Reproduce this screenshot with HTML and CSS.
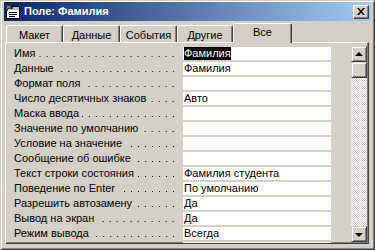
FILE: index.html
```html
<!DOCTYPE html>
<html lang="ru">
<head>
<meta charset="utf-8">
<title>Поле: Фамилия</title>
<link rel="stylesheet" href="styles.css">
</head>
<body>
<div class="window">
  <div class="titlebar">
    <svg class="app-icon" width="16" height="16" viewBox="0 0 16 16">
      <rect x="1.5" y="2.5" width="13" height="12" fill="#fff" stroke="#000"/>
      <rect x="2" y="3" width="12" height="3" fill="#c0c0c0"/>
      <line x1="4" y1="8.5" x2="12" y2="8.5" stroke="#000"/>
      <line x1="4" y1="10.5" x2="12" y2="10.5" stroke="#000"/>
      <line x1="4" y1="12.5" x2="10" y2="12.5" stroke="#000"/>
      <path d="M1 1h5v2h2v2H3v2H1z" fill="#404040"/>
      <path d="M2 2h3v2H2z" fill="#808080"/>
    </svg>
    <span class="title">Поле: Фамилия</span>
    <button class="close" type="button" aria-label="Закрыть">
      <svg width="8" height="7" viewBox="0 0 8 7">
        <path d="M0 0h2l2 2.5L6 0h2L5 3.5 8 7H6L4 4.5 2 7H0l3-3.5z" fill="#000"/>
      </svg>
    </button>
  </div>

  <div class="tabctl">
    <div class="tabstrip">
      <div class="tab">Макет</div>
      <div class="tab">Данные</div>
      <div class="tab">События</div>
      <div class="tab">Другие</div>
      <div class="tab active">Все</div>
    </div>
    <div class="panel">
      <div class="props">
        <div class="row"><div class="label"><span>Имя</span><span class="dots"></span></div><div class="value"><span class="sel">Фамилия</span></div></div>
        <div class="row"><div class="label"><span>Данные</span><span class="dots"></span></div><div class="value">Фамилия</div></div>
        <div class="row"><div class="label"><span>Формат поля</span><span class="dots"></span></div><div class="value"></div></div>
        <div class="row"><div class="label"><span>Число десятичных знаков</span><span class="dots"></span></div><div class="value">Авто</div></div>
        <div class="row"><div class="label"><span>Маска ввода</span><span class="dots"></span></div><div class="value"></div></div>
        <div class="row"><div class="label"><span>Значение по умолчанию</span><span class="dots"></span></div><div class="value"></div></div>
        <div class="row"><div class="label"><span>Условие на значение</span><span class="dots"></span></div><div class="value"></div></div>
        <div class="row"><div class="label"><span>Сообщение об ошибке</span><span class="dots"></span></div><div class="value"></div></div>
        <div class="row"><div class="label"><span>Текст строки состояния</span><span class="dots"></span></div><div class="value">Фамилия студента</div></div>
        <div class="row"><div class="label"><span>Поведение по Enter</span><span class="dots"></span></div><div class="value">По умолчанию</div></div>
        <div class="row"><div class="label"><span>Разрешить автозамену</span><span class="dots"></span></div><div class="value">Да</div></div>
        <div class="row"><div class="label"><span>Вывод на экран</span><span class="dots"></span></div><div class="value">Да</div></div>
        <div class="row"><div class="label"><span>Режим вывода</span><span class="dots"></span></div><div class="value">Всегда</div></div>
        <div class="row"><div class="label"></div><div class="value"></div></div>
      </div>
      <div class="scrollbar">
        <div class="sbtn"><span class="arrow up"></span></div>
        <div class="track">
          <div class="thumb"></div>
        </div>
        <div class="sbtn"><span class="arrow down"></span></div>
      </div>
    </div>
  </div>
</div>
</body>
</html>
```

FILE: styles.css
```css
* { box-sizing: border-box; }

html, body {
  margin: 0;
  padding: 0;
  background: #d4d0c8;
}

body {
  font-family: "Liberation Sans", Arial, sans-serif;
  font-size: 11px;
  color: #000;
}

.window {
  width: 375px;
  height: 250px;
  background: #d4d0c8;
  border: 1px solid;
  border-color: #d4d0c8 #404040 #404040 #d4d0c8;
  box-shadow: inset 1px 1px #fff, inset -1px -1px #808080;
  padding: 1px 3px 3px 3px;
  display: flex;
  flex-direction: column;
  overflow: hidden;
}

.titlebar {
  height: 19px;
  flex: none;
  display: flex;
  align-items: center;
  padding: 0 2px 0 1px;
  background: linear-gradient(to right, #0a246a, #a6caf0);
}

.app-icon {
  flex: none;
  display: block;
}

.title {
  margin-left: 3px;
  color: #fff;
  font-weight: bold;
  font-size: 11px;
  line-height: 13px;
  flex: 1;
}

.close {
  flex: none;
  width: 16px;
  height: 14px;
  padding: 0;
  margin: 0;
  background: #d4d0c8;
  border: 1px solid;
  border-color: #fff #404040 #404040 #fff;
  box-shadow: inset -1px -1px #808080;
  display: flex;
  align-items: center;
  justify-content: center;
}

.close svg { display: block; margin: 0 1px 1px 0; }

.tabctl {
  flex: 1;
  display: flex;
  flex-direction: column;
  margin: 2px 2px 2px 1px;
  min-height: 0;
}

.tabstrip {
  height: 19px;
  flex: none;
  display: flex;
  align-items: flex-end;
  padding-left: 1px;
  position: relative;
  z-index: 1;
}

.tab {
  width: 57px;
  height: 17px;
  flex: none;
  border: 1px solid;
  border-bottom: none;
  border-color: #fff #404040 transparent #fff;
  box-shadow: inset -1px 0 #808080;
  border-radius: 2px 2px 0 0;
  text-align: center;
  line-height: 16px;
  padding-top: 1px;
  background: #d4d0c8;
}

.tab:nth-child(4) { width: 56px; }

.tab.active {
  width: 59px;
  height: 20px;
  margin-bottom: -1px;
  padding-top: 0;
  line-height: 17px;
}

.panel {
  flex: 1;
  min-height: 0;
  display: flex;
  align-items: flex-start;
  border: 1px solid;
  border-color: #fff #404040 #404040 #fff;
  box-shadow: inset -1px -1px #808080;
  padding: 4px 1px 1px 8px;
  overflow: hidden;
}

.props {
  width: 317px;
  flex: none;
  display: flex;
  flex-direction: column;
}

.row {
  display: flex;
  height: 15px;
  flex: none;
}

.label {
  width: 169px;
  height: 13px;
  display: flex;
  line-height: 13px;
  white-space: nowrap;
}

.dots {
  flex: 1;
  margin: 0 9px 0 3px;
  background-image: linear-gradient(to left, #000 1px, transparent 1px);
  background-size: 7px 1px;
  background-repeat: repeat-x;
  background-position: right 0 top 9px;
}

.value {
  width: 148px;
  height: 13px;
  background: #fff;
  line-height: 13px;
  padding-left: 1px;
  white-space: nowrap;
  overflow: hidden;
}

.sel {
  background: #000;
  color: #fff;
  display: inline-block;
  height: 13px;
}

.scrollbar {
  margin-left: auto;
  margin-top: -1px;
  width: 16px;
  height: 196px;
  flex: none;
  display: flex;
  flex-direction: column;
}

.sbtn, .thumb {
  width: 16px;
  height: 16px;
  flex: none;
  background: #d4d0c8;
  border: 1px solid;
  border-color: #d4d0c8 #404040 #404040 #d4d0c8;
  box-shadow: inset 1px 1px #fff, inset -1px -1px #808080;
  display: flex;
  align-items: center;
  justify-content: center;
}

.track {
  flex: 1;
  background: repeating-conic-gradient(#d4d0c8 0 25%, #fff 0 50%) 0 0 / 2px 2px;
}

.arrow {
  width: 0;
  height: 0;
  border-left: 4px solid transparent;
  border-right: 4px solid transparent;
}

.arrow.up { border-bottom: 4px solid #000; margin-top: -1px; }
.arrow.down { border-top: 4px solid #000; margin-top: 1px; }
```
